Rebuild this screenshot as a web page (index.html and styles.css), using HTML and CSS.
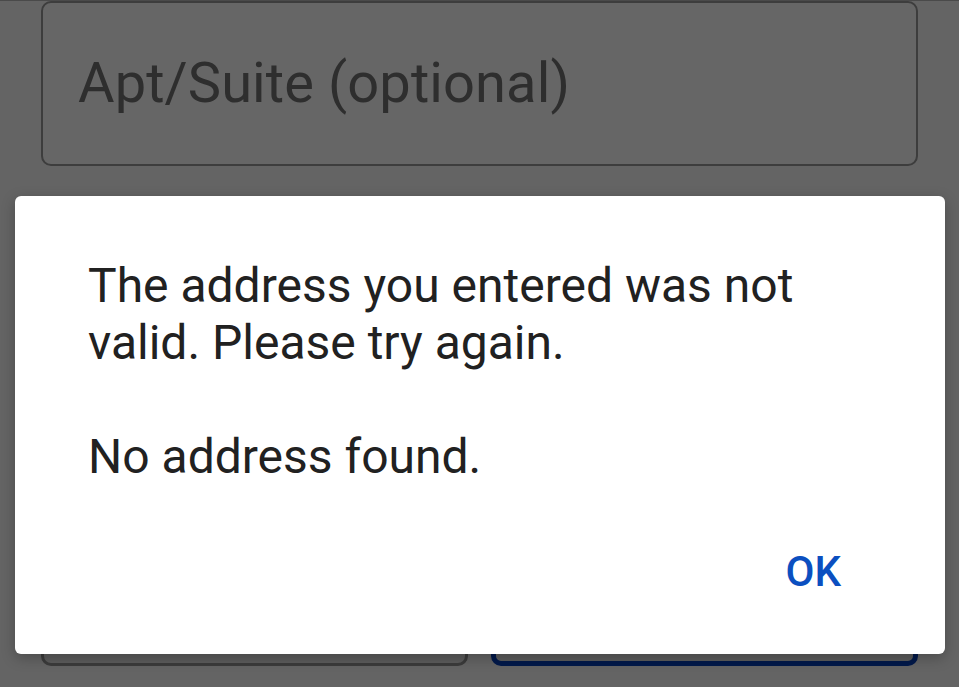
FILE: index.html
```html
<!DOCTYPE html>
<html>
<head>
<meta charset="utf-8">
<link rel="stylesheet" href="styles.css">
</head>
<body>
<div class="page">
  <div class="topline"></div>
  <div class="field"><span class="placeholder">Apt/Suite (optional)</span></div>
  <div class="actions">
    <div class="btn btn-secondary"></div>
    <div class="btn btn-primary"></div>
  </div>
</div>
<div class="dialog">
  <p class="message">The address you entered was not<br>valid. Please try again.</p>
  <p class="message">No address found.</p>
  <div class="dialog-actions"><span class="ok">OK</span></div>
</div>
</body>
</html>
```
FILE: styles.css
```css
html, body {
  margin: 0;
  padding: 0;
}
body {
  width: 959px;
  height: 687px;
  overflow: hidden;
  background: #646464;
  font-family: Roboto, "Liberation Sans", sans-serif;
  position: relative;
}
.page {
  display: flex;
  flex-direction: column;
}
.topline {
  height: 1px;
  background: #4a4a4a;
}
.field {
  margin: 0 41px;
  height: 161px;
  border: 2px solid #3d3d3d;
  border-radius: 10px;
  background: #666666;
  display: flex;
  align-items: center;
  padding-left: 35px;
}
.placeholder {
  font-size: 56px;
  color: #2e2e2e;
  letter-spacing: 0.1px;
  margin-top: -1px;
}
.actions {
  display: flex;
  gap: 23px;
  margin: 392px 41px 0;
}
.btn {
  width: 427px;
  height: 108px;
  border-radius: 10px;
  box-sizing: border-box;
}
.btn-secondary {
  border: 3px solid #3b3b3b;
  background: #5c5c5c;
}
.btn-primary {
  border: 5px solid #02194a;
  background: #5c5c5c;
}
.dialog {
  position: absolute;
  left: 15px;
  top: 196px;
  width: 930px;
  height: 458px;
  background: #ffffff;
  border-radius: 6px;
  box-shadow: 0 4px 14px rgba(0,0,0,0.25);
  box-sizing: border-box;
  padding: 61px 73px 0 73px;
  display: flex;
  flex-direction: column;
}
.message {
  margin: 0 0 57px 0;
  font-size: 48px;
  line-height: 57px;
  color: #212121;
}
.message + .message {
  margin-bottom: 0;
}
.dialog-actions {
  display: flex;
  justify-content: flex-end;
  margin-top: 62px;
  padding-right: 31px;
}
.ok {
  font-size: 42px;
  font-weight: 500;
  color: #0b4fc0;
  line-height: 50px;
}
```
